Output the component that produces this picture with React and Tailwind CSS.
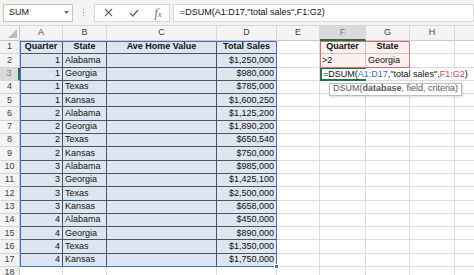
import React from 'react'

const data = [
  [1, 'Alabama', '$1,250,000'],
  [1, 'Georgia', '$980,000'],
  [1, 'Texas', '$785,000'],
  [1, 'Kansas', '$1,600,250'],
  [2, 'Alabama', '$1,125,200'],
  [2, 'Georgia', '$1,890,200'],
  [2, 'Texas', '$650,540'],
  [2, 'Kansas', '$750,000'],
  [3, 'Alabama', '$985,000'],
  [3, 'Georgia', '$1,425,100'],
  [3, 'Texas', '$2,500,000'],
  [3, 'Kansas', '$658,000'],
  [4, 'Alabama', '$450,000'],
  [4, 'Georgia', '$890,000'],
  [4, 'Texas', '$1,350,000'],
  [4, 'Kansas', '$1,750,000'],
]

const colCls = ['col-start-1', 'col-start-2', 'col-start-3', 'col-start-4', 'col-start-5', 'col-start-6', 'col-start-7', 'col-start-8', 'col-start-9', 'col-start-10']
const rowCls = ['row-start-1', 'row-start-2', 'row-start-3', 'row-start-4', 'row-start-5', 'row-start-6', 'row-start-7', 'row-start-8', 'row-start-9', 'row-start-10', 'row-start-11', 'row-start-12', 'row-start-13', 'row-start-14', 'row-start-15', 'row-start-16', 'row-start-17', 'row-start-18', 'row-start-19']
// column I sits past the right edge, its letter is not in view
const letters = ['', 'A', 'B', 'C', 'D', 'E', 'F', 'G', 'H', '']

function FormulaBar(){
  return (
    <div className="h-[26px] bg-[#f3f3f3] border-b border-[#d6d6d6] flex items-center pl-[3px]">
      <div className="w-[70px] h-[18px] bg-white border border-[#c8c8c8] flex items-center justify-between pl-[5px] pr-[3px] text-[9px] text-[#222]">
        <span>SUM</span>
        <svg width="5" height="3" viewBox="0 0 5 3"><path d="M0 0h5L2.5 3z" fill="#666" /></svg>
      </div>
      <div className="w-[21px] flex flex-col items-center gap-[2px]">
        <div className="w-[1px] h-[1px] bg-[#9a9a9a]" />
        <div className="w-[1px] h-[1px] bg-[#9a9a9a]" />
        <div className="w-[1px] h-[1px] bg-[#9a9a9a]" />
      </div>
      <div className="w-[76px] h-[18px] bg-white border border-[#d6d6d6] flex items-center">
        <div className="w-[26px] flex justify-center">
          <svg width="9" height="9" viewBox="0 0 9 9"><path d="M1 1l7 7M8 1L1 8" stroke="#5e5e5e" strokeWidth="1.1" /></svg>
        </div>
        <div className="w-[26px] flex justify-center">
          <svg width="10" height="8" viewBox="0 0 10 8"><path d="M1 4.2l2.8 2.8L9 1" stroke="#5e5e5e" strokeWidth="1.2" fill="none" /></svg>
        </div>
        <div className="w-[22px] flex justify-center font-['Liberation_Serif',serif] italic text-[#6a6a6a] leading-none">
          <span className="text-[12px]">f</span><span className="text-[8px] mt-[4px]">x</span>
        </div>
      </div>
      <div className="ml-[3px] flex-1 h-[18px] bg-white border border-[#d6d6d6] flex items-center pl-[6px] text-[9px] text-[#111] whitespace-nowrap">
        =DSUM(A1:D17,"total sales",F1:G2)
      </div>
    </div>
  )
}

function cellContent(r, c){
  if(r === 1){
    if(c === 1) return { text: 'Quarter', bold: true, align: 'center' }
    if(c === 2) return { text: 'State', bold: true, align: 'center' }
    if(c === 3) return { text: 'Ave Home Value', bold: true, align: 'center' }
    if(c === 4) return { text: 'Total Sales', bold: true, align: 'center' }
    if(c === 6) return { text: 'Quarter', bold: true, align: 'center' }
    if(c === 7) return { text: 'State', bold: true, align: 'center' }
  }
  if(r >= 2 && r <= 17){
    const d = data[r - 2]
    if(c === 1) return { text: d[0], align: 'right' }
    if(c === 2) return { text: d[1], align: 'left' }
    if(c === 4) return { text: d[2], align: 'right' }
  }
  if(r === 2){
    if(c === 6) return { text: '>2', align: 'left' }
    if(c === 7) return { text: 'Georgia', align: 'left' }
  }
  return null
}

function Sheet(){
  const cells = []
  for(let r = 0; r < 19; r++){
    for(let c = 0; c < 10; c++){
      const pos = `${rowCls[r]} ${colCls[c]}`
      if(r === 0){
        if(c === 0){
          cells.push(
            <div key="corner" className={`${pos} bg-[#f3f3f3] border-r border-b border-[#c8c8c8] flex items-end justify-end p-[2px]`}>
              <svg width="9" height="9" viewBox="0 0 9 9"><path d="M9 0v9H0z" fill="#bdbdbd" /></svg>
            </div>
          )
        } else {
          const active = c === 6
          cells.push(
            <div key={`h${c}`} className={`${pos} flex items-center justify-center text-[9px] border-r border-r-[#d6d6d6] ${active ? 'bg-[#dadada] text-[#7b7b7b] border-b-2 border-b-[#217346]' : 'bg-[#f3f3f3] text-[#444] border-b border-b-[#c8c8c8]'}`}>
              {letters[c]}
            </div>
          )
        }
        continue
      }
      if(c === 0){
        const active = r === 3
        cells.push(
          <div key={`r${r}`} className={`${pos} flex items-center justify-center text-[9px] border-b border-b-[#d6d6d6] ${active ? 'bg-[#dadada] text-[#6f8f77] border-r-2 border-r-[#217346]' : 'bg-[#f3f3f3] text-[#444] border-r border-r-[#c8c8c8]'}`}>
            {r}
          </div>
        )
        continue
      }
      const inTable = r <= 17 && c >= 1 && c <= 4
      const inCrit = r <= 2 && (c === 6 || c === 7)
      const tone = inTable
        ? 'bg-[#dce6f1] border-[#4b5563]'
        : inCrit
          ? 'bg-[#fcf0f0] border-[#cfc4c4]'
          : 'bg-white border-[#dcdcdc]'

      if(r === 3 && c === 6){
        // active cell: text overflows into G3/H3, green frame drawn by the overlay below
        cells.push(
          <div key={`c${r}-${c}`} className={`${pos} relative z-30 flex items-center pl-[2px]`}>
            <span className="bg-white pl-[1px] pr-[1px] text-[9px] leading-[10px] whitespace-nowrap text-[#111]">
              =DSUM(<span className="text-[#3a6fc4]">A1:D17</span>,"total sales",<span className="text-[#d2433f]">F1:G2</span>)
            </span>
            <div className="absolute left-[9px] top-[15px] h-[13px] px-[3px] bg-white border border-[#bdbdbd] shadow-[1px_1px_2px_rgba(0,0,0,0.15)] flex items-center text-[9px] text-[#5a5a5a] whitespace-nowrap">
              DSUM(<span className="font-bold">database</span>, field, criteria)
            </div>
          </div>
        )
        continue
      }

      const content = cellContent(r, c)
      const align = content?.align === 'right' ? 'justify-end' : content?.align === 'center' ? 'justify-center' : 'justify-start'
      cells.push(
        <div key={`c${r}-${c}`} className={`${pos} ${tone} border-r border-b flex items-center ${align} px-[2px] text-[9px] text-[#111] whitespace-nowrap overflow-hidden ${content?.bold ? 'font-bold' : ''}`}>
          {content ? content.text : null}
        </div>
      )
    }
  }

  return (
    <div className="grid grid-cols-[20px_43px_44px_110px_60px_43px_46px_44px_45px_60px] grid-rows-[15px_repeat(18,13.3px)]">
      {cells}
      <div className="row-start-2 row-end-19 col-start-2 col-end-6 relative z-20 border border-[#4472c4] pointer-events-none">
        <div className="absolute -right-[3px] -bottom-[3px] w-[5px] h-[5px] bg-[#4472c4] border border-white" />
      </div>
      <div className="row-start-2 row-end-4 col-start-7 col-end-9 z-20 border border-[#e06c6c] pointer-events-none" />
      <div className="row-start-4 col-start-7 z-20 bg-white border-2 border-[#217346] pointer-events-none" />
    </div>
  )
}

export default function App(){
  return (
    <div className="w-[474px] h-[275px] overflow-hidden bg-white font-['Liberation_Sans',Arial,sans-serif]">
      <FormulaBar />
      <Sheet />
    </div>
  )
}
